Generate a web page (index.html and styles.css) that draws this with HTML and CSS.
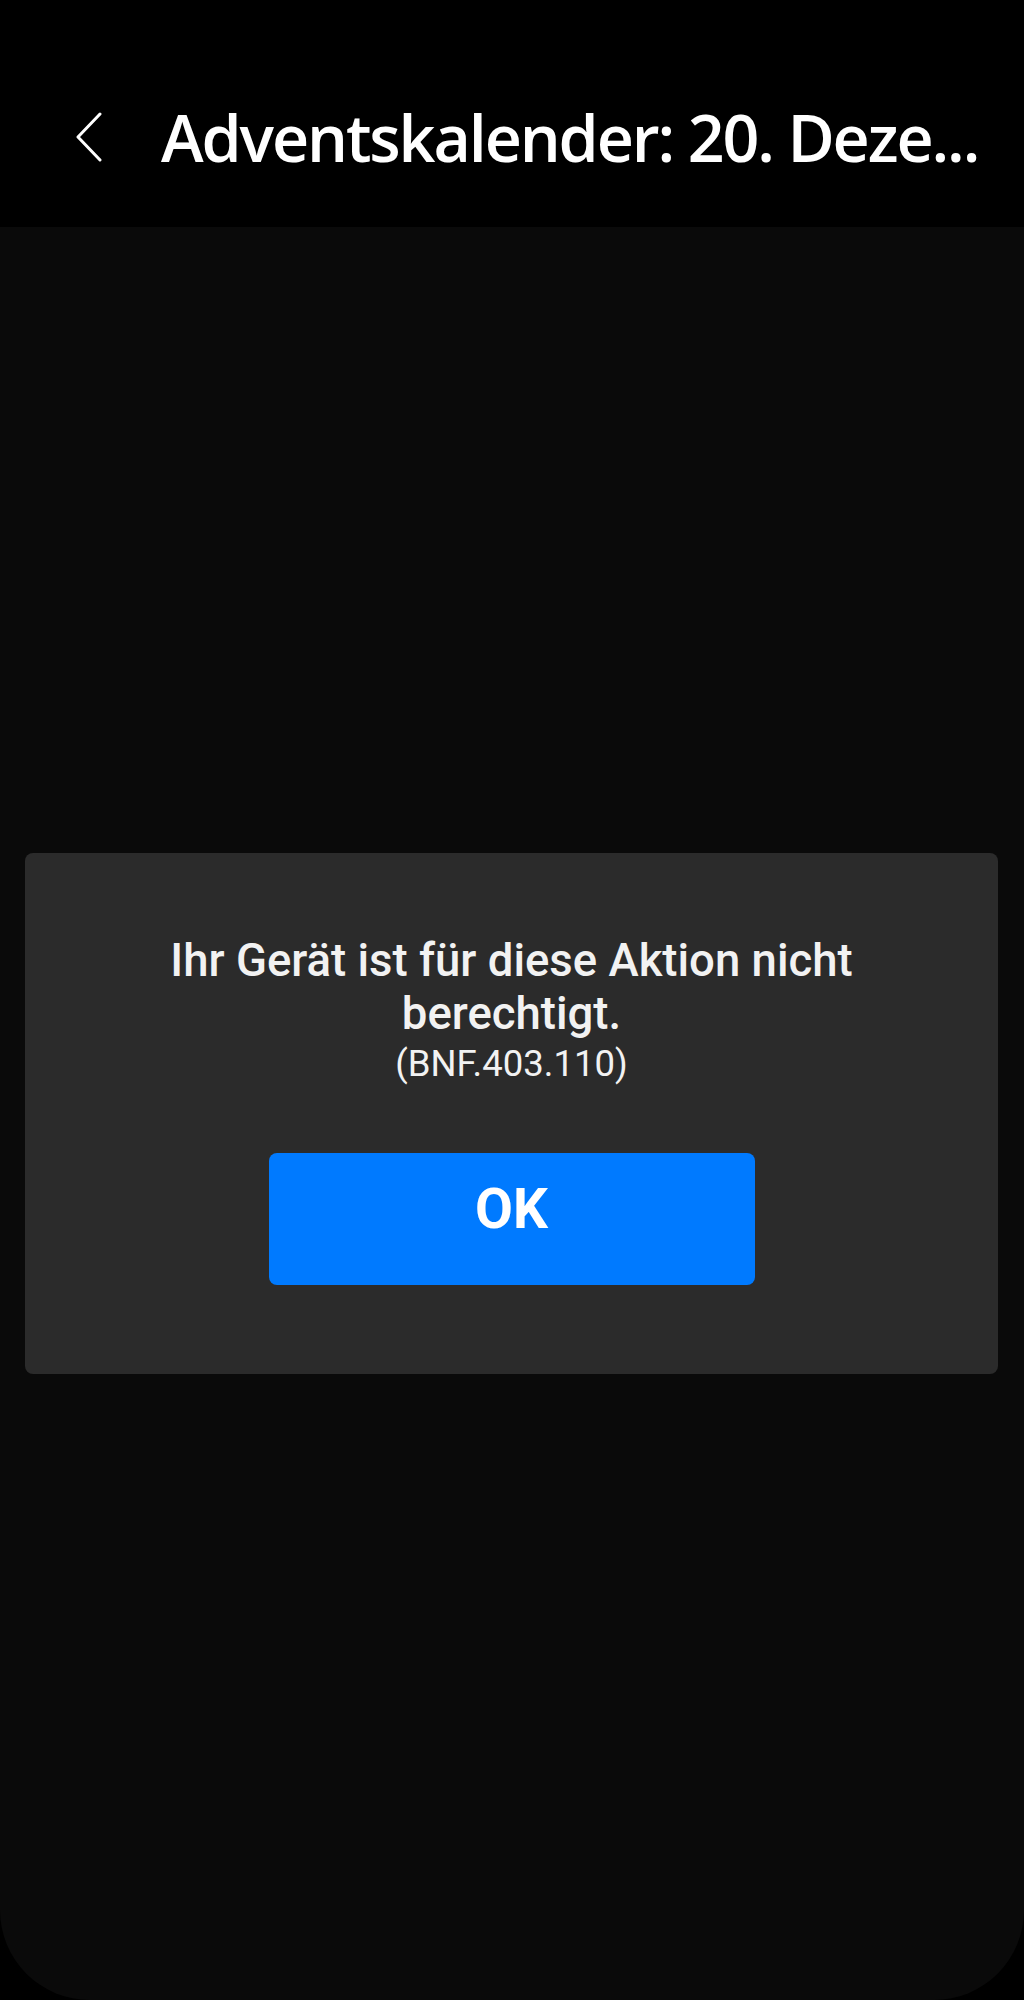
FILE: index.html
```html
<!DOCTYPE html>
<html lang="de">
<head>
  <meta charset="UTF-8">
  <meta name="viewport" content="width=device-width, initial-scale=1.0">
  <title>Adventskalender</title>
  <link rel="stylesheet" href="styles.css">
</head>
<body>
  <div class="screen">
    <header class="topbar">
      <button class="back" aria-label="Zurück">
        <svg width="28" height="50" viewBox="0 0 28 50">
          <path d="M25 2 L3 25 L25 48" fill="none" stroke="#fff" stroke-width="3" stroke-linecap="round" stroke-linejoin="round"/>
        </svg>
      </button>
      <h1 class="title">Adventskalender: 20. Deze...</h1>
    </header>

    <main class="content">
      <div class="dialog">
        <p class="message">Ihr Gerät ist für diese Aktion nicht berechtigt.</p>
        <p class="code">(BNF.403.110)</p>
        <button class="ok" onclick="closeDialog()">OK</button>
      </div>
    </main>
  </div>

  <script>
    function closeDialog() {
      document.querySelector('.dialog').style.visibility = 'hidden';
    }
  </script>
</body>
</html>
```

FILE: styles.css
```css
body {
  margin: 0;
  padding: 0;
  background-color: #000;
}

.screen {
  display: flex;
  flex-direction: column;
  min-height: 2000px;
  background-color: #0a0a0a;
  border-radius: 0 0 90px 90px;
  overflow: hidden;
}

.topbar {
  display: flex;
  align-items: center;
  height: 227px;
  padding-top: 46px;
  box-sizing: border-box;
  background-color: #000;
}

.back {
  display: flex;
  align-items: center;
  background: none;
  border: none;
  padding: 0;
  margin-left: 75px;
  margin-right: 58px;
  cursor: pointer;
}

.title {
  margin: 0;
  color: #fff;
  font-family: 'Open Sans', sans-serif;
  font-weight: 600;
  font-size: 64.5px;
  letter-spacing: -2.1px;
  white-space: nowrap;
}

.content {
  flex: 1;
  display: flex;
  align-items: center;
  justify-content: center;
  padding: 0 26px 0 25px;
}

.dialog {
  width: 100%;
  background-color: #2b2b2b;
  border-radius: 8px;
  padding: 81px 40px 89px;
  box-sizing: border-box;
  text-align: center;
  font-family: 'Roboto', sans-serif;
  color: #f2f2f2;
}

.message {
  margin: 0 auto;
  max-width: 760px;
  font-size: 45.5px;
  font-weight: 500;
  line-height: 53px;
}

.code {
  margin: 0;
  font-size: 36.5px;
  line-height: 47px;
}

.ok {
  display: block;
  width: 486px;
  height: 132px;
  margin: 66px auto 0;
  padding: 0 0 20px;
  background-color: #007aff;
  color: #fff;
  border: none;
  border-radius: 8px;
  font-family: 'Roboto', sans-serif;
  font-size: 55px;
  font-weight: 700;
  cursor: pointer;
}
```
